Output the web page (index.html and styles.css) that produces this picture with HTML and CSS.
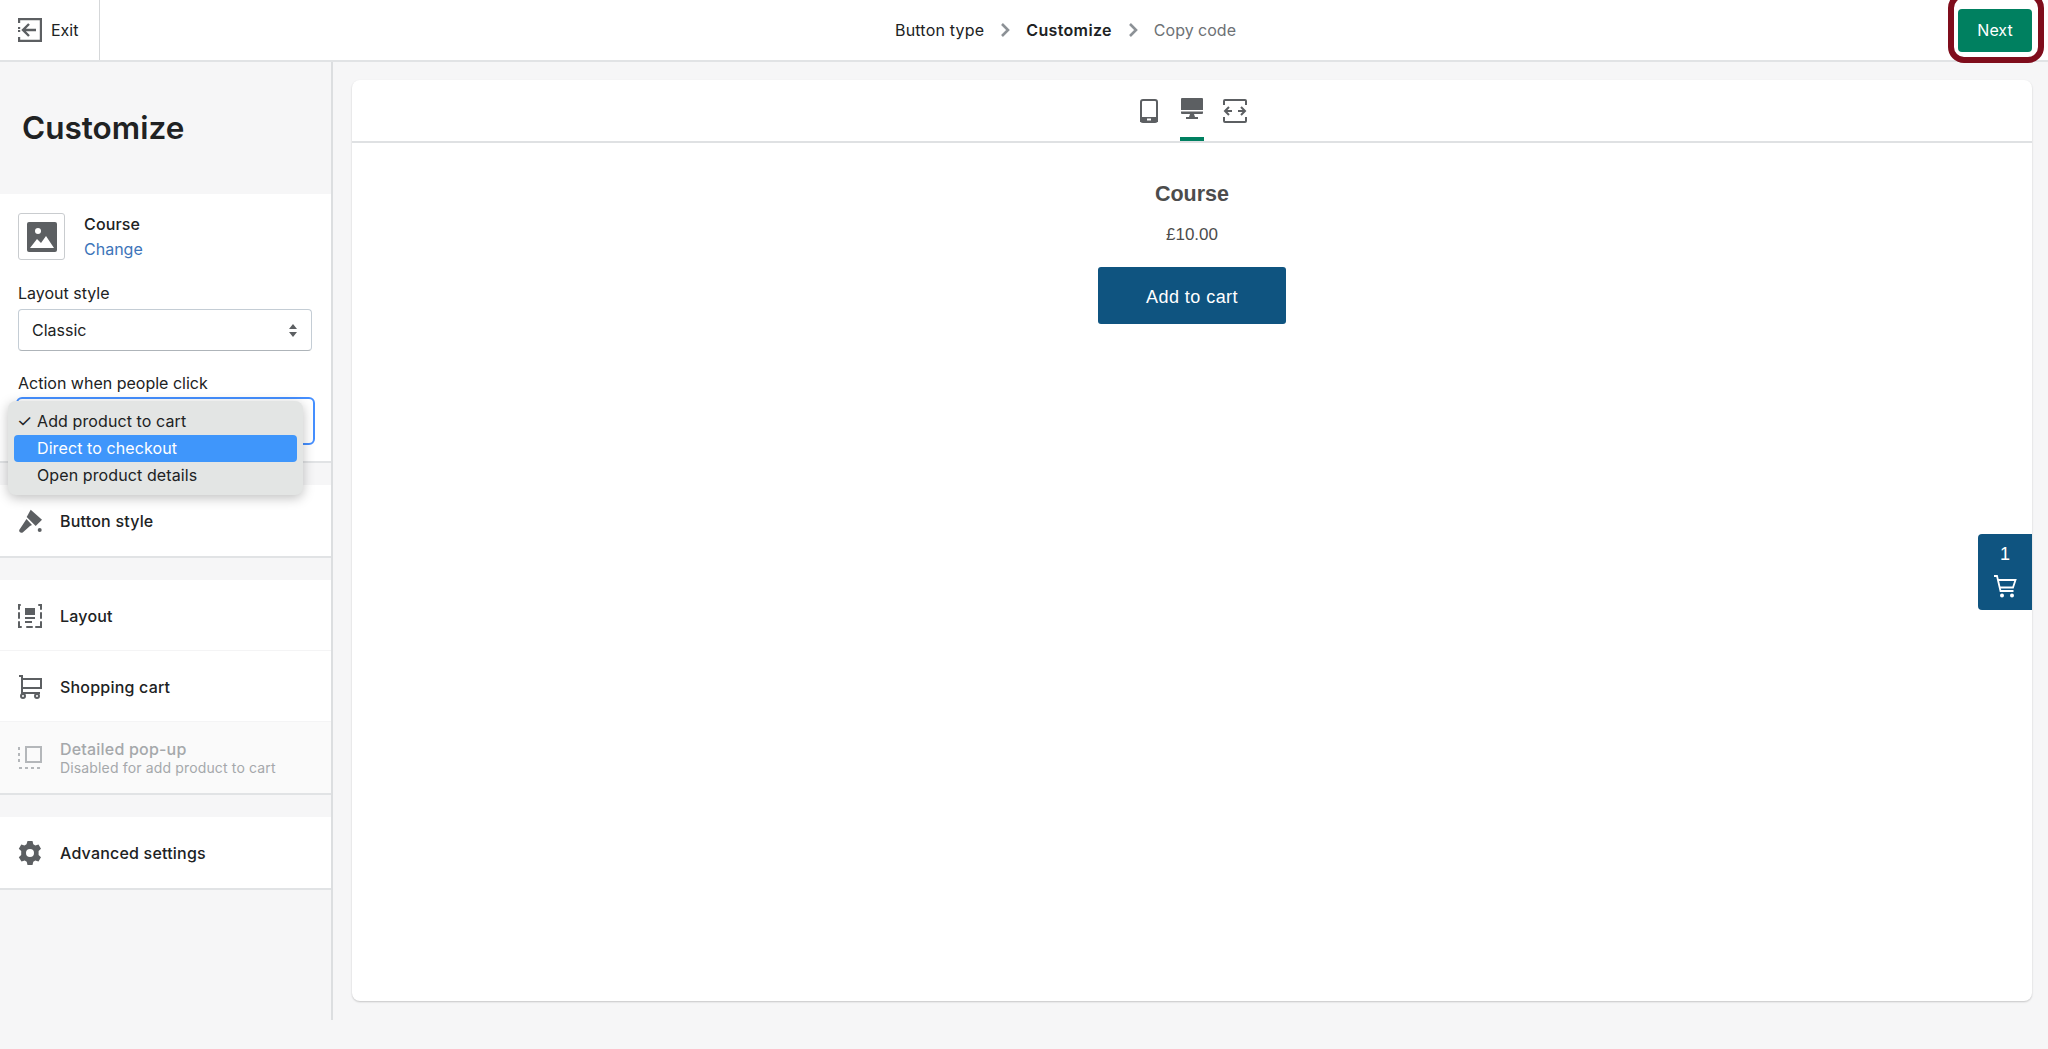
FILE: index.html
```html
<!DOCTYPE html>
<html lang="en">
<head>
    <meta charset="UTF-8">
    <meta name="viewport" content="width=device-width, initial-scale=1.0">
    <title>Customize</title>
    <link rel="stylesheet" href="styles.css">
</head>
<body>
    <header class="topbar">
        <a class="exit">
            <svg class="icon-exit" viewBox="0 0 24 24" fill="none" stroke="#5c5f62" stroke-width="2.400">
                <path d="M1 5V1h22v22H1v-4"/>
                <path d="M1 9v6" stroke-dasharray="2 1"/>
                <path d="M18 12H6M11 6l-6 6 6 6"/>
            </svg>
            <span>Exit</span>
        </a>
        <nav class="steps">
            <span class="done">Button type</span>
            <svg class="chevron" viewBox="0 0 10 16" fill="none" stroke="#8c9196" stroke-width="2.600"><path d="M2 2l6 6-6 6"/></svg>
            <span class="current">Customize</span>
            <svg class="chevron" viewBox="0 0 10 16" fill="none" stroke="#8c9196" stroke-width="2.600"><path d="M2 2l6 6-6 6"/></svg>
            <span class="todo">Copy code</span>
        </nav>
        <button class="next">Next</button>
        <div class="highlight"></div>
    </header>

    <div class="main">
        <aside class="sidebar">
            <h1>Customize</h1>

            <section class="panel product-panel">
                <div class="product">
                    <div class="thumb">
                        <svg viewBox="0 0 30 30" width="30" height="30">
                            <path fill="#5c5f62" d="M2 0h26a2 2 0 0 1 2 2v26a2 2 0 0 1-2 2H2a2 2 0 0 1-2-2V2a2 2 0 0 1 2-2z"/>
                            <circle cx="11" cy="9" r="3" fill="#fff"/>
                            <path fill="#fff" d="M3 26l7-9 4 4 5-7 8 12z"/>
                        </svg>
                    </div>
                    <div class="product-text">
                        <div class="product-name">Course</div>
                        <a class="change">Change</a>
                    </div>
                </div>
                <label class="field-label">Layout style</label>
                <div class="select">
                    <span>Classic</span>
                    <svg viewBox="0 0 8 13" width="8" height="13"><path fill="#5c5f62" d="M4 0l4 5H0zM4 13L0 8h8z"/></svg>
                </div>
                <label class="field-label second">Action when people click</label>
                <div class="select focused"></div>
                <ul class="dropdown">
                    <li><span class="tick">✓</span>Add product to cart</li>
                    <li class="active">Direct to checkout</li>
                    <li>Open product details</li>
                </ul>
            </section>

            <section class="panel">
                <div class="row">
                    <svg class="row-icon" viewBox="0 0 24 24" fill="#5c5f62">
                        <path d="M12.700.7L24 10.700 17.700 17 8.700 8z"/>
                        <path d="M8.500 10l5.500 6-2 1-7 6.300c-1 .8-2.500.7-3.300-.3s-.7-2.300.2-3.100z"/>
                        <circle cx="21.700" cy="21" r="2"/>
                    </svg>
                    <span>Button style</span>
                </div>
            </section>

            <section class="panel rows">
                <div class="row">
                    <svg class="row-icon" viewBox="0 0 24 24" fill="none" stroke="#5c5f62" stroke-width="2">
                        <path d="M2 1h-1v4M1 9v5M1 18v5h2M9 23h5M18 23h5v-5M23 14V9M23 5V1h-2" stroke-linecap="round"/>
                        <rect x="7" y="4" width="10" height="7" fill="#5c5f62" stroke="none"/>
                        <path d="M7 14h10M7 18h7"/>
                    </svg>
                    <span>Layout</span>
                </div>
                <div class="row">
                    <svg class="row-icon" viewBox="0 0 24 24" fill="none" stroke="#5c5f62" stroke-width="2">
                        <path d="M1 1h3v17h18M4 4h19v9H4"/>
                        <circle cx="5" cy="21" r="2"/>
                        <circle cx="19" cy="21" r="2"/>
                    </svg>
                    <span>Shopping cart</span>
                </div>
                <div class="row disabled">
                    <svg class="row-icon" viewBox="0 0 24 24" fill="none" stroke="#b4b7ba" stroke-width="2">
                        <rect x="8" y="1" width="15" height="15"/>
                        <path d="M1 1v15M1 22h22" stroke-dasharray="3 3"/>
                    </svg>
                    <div>
                        <div class="row-title">Detailed pop-up</div>
                        <div class="row-note">Disabled for add product to cart</div>
                    </div>
                </div>
            </section>

            <section class="panel">
                <div class="row">
                    <svg class="row-icon" viewBox="0 0 24 24" fill="#5c5f62">
                        <path fill-rule="evenodd" d="M9.500 0h5l.8 3.300 2 1.100 3.200-1 2.500 4.300-2.400 2.300v4l2.400 2.300-2.500 4.300-3.200-1-2 1.100-.8 3.300h-5l-.8-3.300-2-1.100-3.200 1L.8 16.300l2.400-2.300v-4L.8 7.700l2.500-4.300 3.200 1 2-1.100zM12 8a4 4 0 1 0 0 8 4 4 0 0 0 0-8z"/>
                    </svg>
                    <span>Advanced settings</span>
                </div>
            </section>
        </aside>

        <main class="content">
            <div class="card">
                <div class="tabs">
                    <div class="tab">
                        <svg viewBox="0 0 18 24" width="18" height="24" fill="none" stroke="#5c5f62" stroke-width="2">
                            <rect x="1" y="1" width="16" height="22" rx="2"/>
                            <path d="M1 19h16v3H1z" fill="#5c5f62"/>
                            <path d="M7 20.500h4" stroke="#fff"/>
                        </svg>
                    </div>
                    <div class="tab selected">
                        <svg viewBox="0 0 22 24" width="22" height="24" fill="#5c5f62">
                            <path d="M1 1h20a1 1 0 0 1 1 1v14a1 1 0 0 1-1 1H1a1 1 0 0 1-1-1V2a1 1 0 0 1 1-1z"/>
                            <path d="M0 13h22v1.500H0z" fill="#fff"/>
                            <path d="M9 17h4l1 3h3v2H5v-2h3z"/>
                        </svg>
                    </div>
                    <div class="tab">
                        <svg viewBox="0 0 24 24" width="24" height="24" fill="none" stroke="#5c5f62" stroke-width="2">
                            <path d="M1 6V2a1 1 0 0 1 1-1h20a1 1 0 0 1 1 1v4M1 18v4a1 1 0 0 0 1 1h20a1 1 0 0 0 1-1v-4"/>
                            <path d="M2 12h7M15 12h7M6 8l-4 4 4 4M18 8l4 4-4 4"/>
                        </svg>
                    </div>
                </div>
                <div class="preview">
                    <h2>Course</h2>
                    <p class="price">£10.00</p>
                    <button class="add">Add to cart</button>
                </div>
                <div class="cart-tab">
                    <div class="count">1</div>
                    <svg viewBox="0 0 24 23" width="24" height="23" fill="none" stroke="#fff" stroke-width="1.800">
                        <path d="M1 1h3l3.500 15h13"/>
                        <path d="M5 5h17.500L20 12.500H6.800"/>
                        <circle cx="9" cy="20.500" r="2" fill="#fff" stroke="none"/>
                        <circle cx="19" cy="20.500" r="2" fill="#fff" stroke="none"/>
                    </svg>
                </div>
            </div>
        </main>
    </div>
</body>
</html>
```

FILE: styles.css
```css
* {
    box-sizing: border-box;
}
html, body {
    margin: 0;
    height: 1049px;
    overflow: hidden;
}
body {
    background-color: #f6f6f7;
    font-family: Inter, "Noto Sans", sans-serif;
    font-size: 16px;
    color: #202223;
}
.topbar {
    position: relative;
    display: flex;
    align-items: center;
    height: 62px;
    background-color: #fff;
    border-bottom: 2px solid #e1e3e5;
}
.exit {
    display: flex;
    align-items: center;
    gap: 9px;
    width: 100px;
    height: 60px;
    padding-left: 18px;
    border-right: 1px solid #d5d7d9;
}
.icon-exit {
    width: 24px;
    height: 24px;
}
.steps {
    display: flex;
    align-items: center;
    margin-left: 795px;
}
.done {
    letter-spacing: 0.2px;
}
.current {
    font-weight: 600;
    letter-spacing: 0.35px;
}
.todo {
    color: #6d7175;
}
.chevron {
    width: 10px;
    height: 16px;
    margin: 0 16px;
}
.next {
    width: 74px;
    height: 43px;
    margin-left: auto;
    margin-right: 16px;
    background-color: #008060;
    color: #fff;
    border: 0;
    border-radius: 4px;
    font-family: inherit;
    font-size: 16px;
}
.highlight {
    position: absolute;
    left: 1948px;
    top: -8px;
    width: 96px;
    height: 71px;
    border: 6px solid #7f0d1c;
    border-radius: 16px;
}
.main {
    display: flex;
}
.sidebar {
    width: 333px;
    height: 958px;
    border-right: 2px solid #dcdee0;
}
h1 {
    margin: 0;
    height: 132px;
    padding: 44px 0 0 22px;
    font-size: 31.500px;
    line-height: 44px;
    font-weight: 600;
}
.panel {
    background-color: #fff;
    border-bottom: 2px solid #e1e3e5;
    margin-bottom: 22px;
}
.product-panel {
    position: relative;
    height: 269px;
    padding: 19px 18px 0;
}
.product {
    display: flex;
    align-items: flex-start;
    gap: 19px;
}
.thumb {
    display: flex;
    align-items: center;
    justify-content: center;
    width: 47px;
    height: 47px;
    border: 1px solid #c9cccf;
    border-radius: 3px;
}
.product-text {
    margin-top: -1px;
}
.product-name {
    font-weight: 500;
    letter-spacing: 0.15px;
    line-height: 25px;
}
.change {
    color: #3d74b9;
    line-height: 25px;
}
.field-label {
    display: block;
    margin-top: 19px;
    line-height: 24px;
}
.second {
    margin-top: 20px;
}
.select {
    display: flex;
    align-items: center;
    justify-content: space-between;
    width: 294px;
    height: 42px;
    margin-top: 4px;
    padding: 0 14px 0 13px;
    border: 1px solid #c4cdd5;
    border-bottom-color: #aeb4b9;
    border-radius: 4px;
}
.focused {
    width: 299px;
    height: 48px;
    margin: 2px 0 0 -2px;
    border: 2px solid #458fff;
    border-radius: 6px;
}
.dropdown {
    position: absolute;
    left: 8px;
    top: 207px;
    width: 295px;
    height: 94px;
    margin: 0;
    padding: 7px 6px 6px;
    list-style: none;
    background-color: #e3e5e4;
    border-radius: 8px;
    box-shadow: 0 3px 12px rgba(0, 0, 0, 0.25);
}
.dropdown li {
    position: relative;
    height: 27px;
    padding-left: 23px;
    border-radius: 4px;
    line-height: 27px;
    letter-spacing: 0.1px;
}
.dropdown .active {
    background-color: #3f96fb;
    color: #fff;
}
.tick {
    position: absolute;
    left: 3px;
    font-size: 17px;
}
.row {
    display: flex;
    align-items: center;
    gap: 18px;
    height: 71px;
    padding-left: 18px;
    font-weight: 450;
    letter-spacing: 0.2px;
    border-bottom: 1px solid #f4f4f5;
}
.row:last-child {
    border-bottom: 0;
}
.rows .row {
    padding-top: 2px;
}
.rows .disabled {
    padding-top: 0;
}
.row-icon {
    width: 24px;
    height: 24px;
    flex: none;
}
.disabled {
    background-color: #fafafa;
    color: #a5a8ab;
}
.row-title {
    line-height: 20px;
}
.row-note {
    font-size: 14px;
    font-weight: 400;
    letter-spacing: 0.15px;
    line-height: 18px;
}
.content {
    flex: 1;
    padding: 18px 16px 0 19px;
}
.card {
    position: relative;
    height: 921px;
    background-color: #fff;
    border-radius: 8px;
    box-shadow: 0 1px 2px rgba(0, 0, 0, 0.2);
}
.tabs {
    display: flex;
    justify-content: center;
    height: 63px;
    border-bottom: 2px solid #dfe1e3;
}
.tab {
    display: flex;
    align-items: center;
    justify-content: center;
    width: 24px;
    height: 61px;
    margin: 0 9.500px;
    padding-top: 1px;
}
.selected {
    border-bottom: 4px solid #008060;
}
.preview {
    text-align: center;
    font-family: "Liberation Sans", Arial, sans-serif;
    color: #4c4c4c;
}
h2 {
    margin: 0;
    padding-top: 37px;
    font-size: 21.500px;
    line-height: 28px;
}
.price {
    margin: 15px 0 0;
    font-size: 17px;
    line-height: 24px;
}
.add {
    width: 188px;
    height: 57px;
    margin-top: 20px;
    background-color: #0f5480;
    color: #fff;
    border: 0;
    border-radius: 3px;
    font-family: inherit;
    font-size: 18px;
    letter-spacing: 0.45px;
    padding-top: 4px;
}
.cart-tab {
    position: absolute;
    right: 0;
    top: 454px;
    display: flex;
    flex-direction: column;
    align-items: center;
    width: 54px;
    height: 76px;
    padding-top: 8px;
    background-color: #0f5480;
    border-radius: 4px 0 0 4px;
    color: #fff;
    font-family: "Liberation Sans", Arial, sans-serif;
    font-size: 18px;
}
.count {
    line-height: 24px;
    margin-bottom: 9px;
}
```
